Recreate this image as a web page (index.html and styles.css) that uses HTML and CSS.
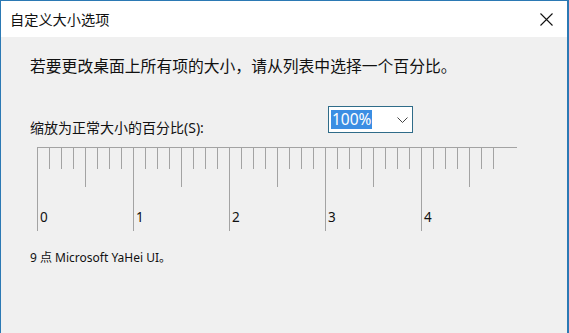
FILE: index.html
```html
<!DOCTYPE html>
<html lang="zh-CN">
<head>
<meta charset="utf-8">
<title>自定义大小选项</title>
<link rel="stylesheet" href="styles.css">
</head>
<body>
<div class="window">
  <div class="titlebar">
    <span class="title">自定义大小选项</span>
    <svg class="close" width="13" height="13" viewBox="0 0 13 13"><path d="M0.5 0.5 L12.5 12.5 M12.5 0.5 L0.5 12.5" stroke="#111" stroke-width="1.1" fill="none"/></svg>
  </div>
  <div class="content">
    <p class="intro">若要更改桌面上所有项的大小，请从列表中选择一个百分比。</p>
    <div class="scale-row">
      <label class="scale-label">缩放为正常大小的百分比(S):</label>
      <div class="combo">
        <span class="combo-value">100%</span>
        <svg class="chevron" width="11" height="6" viewBox="0 0 11 6"><path d="M0.5 0.5 L5.5 5.5 L10.5 0.5" stroke="#444" stroke-width="1" fill="none"/></svg>
      </div>
    </div>
    <svg class="ruler" width="482" height="84" viewBox="0 0 482 84" shape-rendering="crispEdges">
      <g stroke="#a3a3a3" stroke-width="1">
        <line x1="1" y1="0.5" x2="481" y2="0.5"/>
        <line x1="1.5" y1="0" x2="1.5" y2="84"/>
        <line x1="13.5" y1="0" x2="13.5" y2="22"/>
        <line x1="25.5" y1="0" x2="25.5" y2="22"/>
        <line x1="37.5" y1="0" x2="37.5" y2="22"/>
        <line x1="49.5" y1="0" x2="49.5" y2="40"/>
        <line x1="61.5" y1="0" x2="61.5" y2="22"/>
        <line x1="73.5" y1="0" x2="73.5" y2="22"/>
        <line x1="85.5" y1="0" x2="85.5" y2="22"/>
        <line x1="97.5" y1="0" x2="97.5" y2="84"/>
        <line x1="109.5" y1="0" x2="109.5" y2="22"/>
        <line x1="121.5" y1="0" x2="121.5" y2="22"/>
        <line x1="133.5" y1="0" x2="133.5" y2="22"/>
        <line x1="145.5" y1="0" x2="145.5" y2="40"/>
        <line x1="157.5" y1="0" x2="157.5" y2="22"/>
        <line x1="169.5" y1="0" x2="169.5" y2="22"/>
        <line x1="181.5" y1="0" x2="181.5" y2="22"/>
        <line x1="193.5" y1="0" x2="193.5" y2="84"/>
        <line x1="205.5" y1="0" x2="205.5" y2="22"/>
        <line x1="217.5" y1="0" x2="217.5" y2="22"/>
        <line x1="229.5" y1="0" x2="229.5" y2="22"/>
        <line x1="241.5" y1="0" x2="241.5" y2="40"/>
        <line x1="253.5" y1="0" x2="253.5" y2="22"/>
        <line x1="265.5" y1="0" x2="265.5" y2="22"/>
        <line x1="277.5" y1="0" x2="277.5" y2="22"/>
        <line x1="289.5" y1="0" x2="289.5" y2="84"/>
        <line x1="301.5" y1="0" x2="301.5" y2="22"/>
        <line x1="313.5" y1="0" x2="313.5" y2="22"/>
        <line x1="325.5" y1="0" x2="325.5" y2="22"/>
        <line x1="337.5" y1="0" x2="337.5" y2="40"/>
        <line x1="349.5" y1="0" x2="349.5" y2="22"/>
        <line x1="361.5" y1="0" x2="361.5" y2="22"/>
        <line x1="373.5" y1="0" x2="373.5" y2="22"/>
        <line x1="385.5" y1="0" x2="385.5" y2="84"/>
        <line x1="397.5" y1="0" x2="397.5" y2="22"/>
        <line x1="409.5" y1="0" x2="409.5" y2="22"/>
        <line x1="421.5" y1="0" x2="421.5" y2="22"/>
        <line x1="433.5" y1="0" x2="433.5" y2="40"/>
        <line x1="445.5" y1="0" x2="445.5" y2="22"/>
        <line x1="457.5" y1="0" x2="457.5" y2="22"/>
      </g>
      <g class="ruler-nums">
        <text x="4" y="75">0</text>
        <text x="100" y="75">1</text>
        <text x="196" y="75">2</text>
        <text x="292" y="75">3</text>
        <text x="388" y="75">4</text>
      </g>
    </svg>
    <p class="font-note">9 点 Microsoft YaHei UI。</p>
  </div>
</div>
</body>
</html>
```

FILE: styles.css
```css
html, body {
  margin: 0;
  padding: 0;
  background: #f0f0f0;
}

body {
  font-family: "Noto Sans", "Noto Sans CJK SC", sans-serif;
  color: #111;
}

.window {
  width: 569px;
  height: 333px;
  box-sizing: border-box;
  border-top: 1px solid #2b79b4;
  border-left: 1px solid #2b79b4;
  border-right: 2px solid #2b79b4;
  background: #f0f0f0;
  display: flex;
  flex-direction: column;
  overflow: hidden;
}

.titlebar {
  height: 36px;
  flex: none;
  background: #ffffff;
  display: flex;
  align-items: center;
  justify-content: space-between;
  padding: 0 14px 0 9px;
}

.title {
  font-family: "Noto Sans CJK SC", sans-serif;
  font-size: 14.2px;
  color: #111;
}

.close {
  display: block;
  margin-top: 1px;
}

.content {
  flex: 1;
  display: flex;
  flex-direction: column;
  padding: 0 0 0 29px;
}

.intro {
  margin: 18px 0 0 0;
  font-family: "Noto Sans CJK SC", sans-serif;
  font-size: 15.8px;
  line-height: 22px;
  color: #111;
}

.scale-row {
  display: flex;
  align-items: flex-start;
  margin-top: 29px;
}

.scale-label {
  font-family: "Noto Sans", "Noto Sans CJK SC", sans-serif;
  font-size: 14px;
  line-height: 20px;
  margin-top: 12px;
  width: 298px;
  color: #111;
}

.combo {
  width: 85px;
  height: 27px;
  box-sizing: border-box;
  border: 1px solid #2f6c89;
  background: #ffffff;
  display: flex;
  align-items: center;
  justify-content: space-between;
  padding: 0 4px 0 2px;
}

.combo-value {
  background: #3b8ee3;
  color: #ffffff;
  font-family: "Noto Sans", sans-serif;
  font-size: 15.5px;
  line-height: 19px;
  height: 19px;
  padding: 0 1px;
}

.chevron {
  display: block;
  margin-top: 1px;
}

.ruler {
  display: block;
  margin: 9px 0 0 6px;
}

.ruler-nums {
  font-family: "Noto Sans", sans-serif;
  font-size: 13.5px;
  fill: #111;
}

.font-note {
  margin: 19px 0 0 0;
  font-family: "Noto Sans", "Noto Sans CJK SC", sans-serif;
  font-size: 12px;
  line-height: 16px;
  color: #111;
}
```
